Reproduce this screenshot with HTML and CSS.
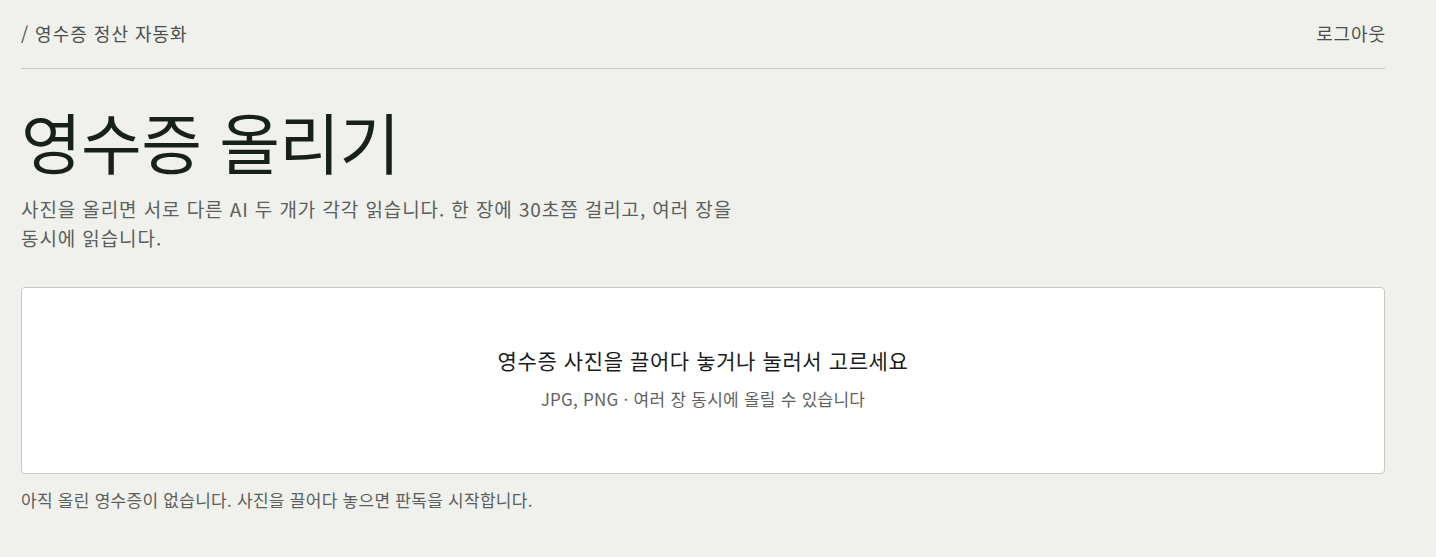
FILE: index.html
```html
<!DOCTYPE html>
<html lang="ko">
<head>
<meta charset="utf-8">
<title>영수증 올리기</title>
<link rel="stylesheet" href="styles.css">
</head>
<body>
<div class="page">
  <header class="topbar">
    <div class="crumb">/ 영수증 정산 자동화</div>
    <a class="logout" href="#">로그아웃</a>
  </header>
  <main class="main">
    <h1 class="title">영수증 올리기</h1>
    <p class="lead">사진을 올리면 서로 다른 AI 두 개가 각각 읽습니다. 한 장에 30초쯤 걸리고, 여러 장을<br>동시에 읽습니다.</p>
    <div class="dropzone">
      <div class="drop-main">영수증 사진을 끌어다 놓거나 눌러서 고르세요</div>
      <div class="drop-sub">JPG, PNG · 여러 장 동시에 올릴 수 있습니다</div>
    </div>
    <p class="empty">아직 올린 영수증이 없습니다. 사진을 끌어다 놓으면 판독을 시작합니다.</p>
  </main>
</div>
</body>
</html>
```

FILE: styles.css
```css
* { box-sizing: border-box; }
html, body { margin: 0; padding: 0; }
body {
  background: #f0f0ec;
  font-family: "Noto Sans CJK KR", "Noto Sans", sans-serif;
  color: #1a211d;
}
.page {
  width: 1364px;
  margin-left: 21px;
}
.topbar {
  display: flex;
  justify-content: space-between;
  align-items: center;
  height: 69px;
  border-bottom: 1px solid #c9c9c4;
  padding-bottom: 2px;
}
.crumb {
  font-size: 18px;
  letter-spacing: 1px;
  color: #4a4f4c;
}
.logout {
  font-size: 18px;
  letter-spacing: 0.9px;
  margin-right: -1px;
  color: #4a4f4c;
  text-decoration: none;
}
.title {
  margin: 26px 0 9px;
  font-size: 66px;
  font-weight: 400;
  line-height: 90px;
  letter-spacing: -0.6px;
  color: #17201b;
}
.lead {
  margin: 0;
  font-size: 19px;
  line-height: 29px;
  letter-spacing: 0.9px;
  color: #5a5f5c;
}
.dropzone {
  margin-top: 35px;
  height: 187px;
  padding-bottom: 5px;
  background: #ffffff;
  border: 1px solid #c9c9c4;
  border-radius: 4px;
  display: flex;
  flex-direction: column;
  align-items: center;
  justify-content: center;
  gap: 11px;
}
.drop-main {
  font-size: 21px;
  letter-spacing: 0.6px;
  color: #1a1d1b;
}
.drop-sub {
  font-size: 17px;
  letter-spacing: 0.25px;
  color: #5f6360;
}
.empty {
  margin: 13px 0 0;
  font-size: 17px;
  letter-spacing: 0.27px;
  color: #5a5f5c;
}
```
